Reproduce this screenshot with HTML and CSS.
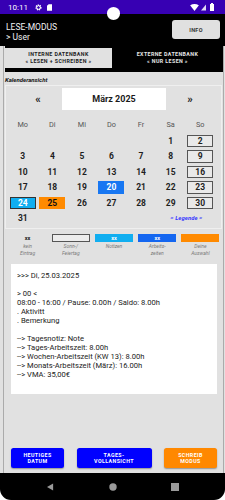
FILE: index.html
```html
<!DOCTYPE html>
<html lang="de">
<head>
<meta charset="utf-8">
<title>Kalender</title>
<link rel="stylesheet" href="styles.css">
</head>
<body>
<div class="screen">
  <div class="status">
    <span class="time">10:11</span>
    <svg class="ic-gear" viewBox="0 0 10 10" width="7" height="7"><circle cx="5" cy="5" r="3.3" fill="none" stroke="#fff" stroke-width="2.2" stroke-dasharray="1.6 1"/><circle cx="5" cy="5" r="2.6" fill="none" stroke="#fff" stroke-width="1.4"/></svg>
    <svg class="ic-sd" viewBox="0 0 6 8" width="5" height="7"><path d="M2 0H6V8H0V2Z" fill="#fff"/></svg>
    <span class="grow"></span>
    <svg class="ic-wifi" viewBox="0 0 10 8" width="9" height="7"><path d="M0 1.5Q5 -1.5 10 1.5L5 8Z" fill="#fff"/></svg>
    <svg class="ic-signal" viewBox="0 0 6 7" width="5" height="7"><path d="M6 0V7H0Z" fill="#fff" opacity="0.85"/></svg>
    <svg class="ic-batt" viewBox="0 0 4 8" width="4" height="8"><path d="M1 0H3V1H4V8H0V1H1Z" fill="#fff"/></svg>
  </div>
  <div class="camera"></div>

  <header class="appbar">
    <div class="title">LESE-MODUS<br>&gt; User</div>
    <button class="info">INFO</button>
  </header>

  <main class="main">
    <div class="card">
      <div class="tabs">
        <div class="tab active">INTERNE DATENBANK<br>« LESEN + SCHREIBEN »</div>
        <div class="tab">EXTERNE DATENBANK<br>« NUR LESEN »</div>
      </div>

      <div class="section-label">Kalenderansicht</div>

      <div class="calendar">
        <div class="month-row">
          <span class="arrow">«</span>
          <div class="month">März 2025</div>
          <span class="arrow">»</span>
        </div>
        <div class="grid weekdays">
          <span>Mo</span><span>Di</span><span>Mi</span><span>Do</span><span>Fr</span><span>Sa</span><span>So</span>
        </div>
        <div class="grid days">
          <span></span><span></span><span></span><span></span><span></span><span>1</span><span><b class="mark sun">2</b></span>
          <span>3</span><span>4</span><span>5</span><span>6</span><span>7</span><span>8</span><span><b class="mark sun">9</b></span>
          <span>10</span><span>11</span><span>12</span><span>13</span><span>14</span><span>15</span><span><b class="mark sun">16</b></span>
          <span>17</span><span>18</span><span>19</span><span><b class="mark work">20</b></span><span>21</span><span>22</span><span><b class="mark sun">23</b></span>
          <span><b class="mark note">24</b></span><span><b class="mark sel">25</b></span><span>26</span><span>27</span><span>28</span><span>29</span><span><b class="mark sun">30</b></span>
          <span>31</span><span></span><span></span><span></span><span></span><span class="legend-link">= Legende =</span>
        </div>
      </div>

      <div class="legend">
        <div class="leg-item"><div class="leg-box plain">xx</div><div class="leg-text">kein<br>Eintrag</div></div>
        <div class="leg-item"><div class="leg-box sun"></div><div class="leg-text">Sonn-/<br>Feiertag</div></div>
        <div class="leg-item"><div class="leg-box note">xx</div><div class="leg-text">Notizen</div></div>
        <div class="leg-item"><div class="leg-box work">xx</div><div class="leg-text">Arbeits-<br>zeiten</div></div>
        <div class="leg-item"><div class="leg-box sel"></div><div class="leg-text">Deine<br>Auswahl</div></div>
      </div>

      <div class="details">
        <p>&gt;&gt;&gt; Di, 25.03.2025</p>
        <p>&nbsp;</p>
        <p>&gt; 00 &lt;</p>
        <p>08:00 - 16:00 / Pause: 0.00h / Saldo: 8.00h</p>
        <p>. Aktivitt</p>
        <p>. Bemerkung</p>
        <p>&nbsp;</p>
        <p>--&gt; Tagesnotiz: Note</p>
        <p>--&gt; Tages-Arbeitszeit: 8.00h</p>
        <p>--&gt; Wochen-Arbeitszeit (KW 13): 8.00h</p>
        <p>--&gt; Monats-Arbeitszeit (März): 16.00h</p>
        <p>--&gt; VMA: 35,00€</p>
      </div>

      <div class="grow"></div>

      <div class="buttons">
        <button class="btn blue small">HEUTIGES<br>DATUM</button>
        <button class="btn blue wide">TAGES-<br>VOLLANSICHT</button>
        <button class="btn orange small">SCHREIB<br>MODUS</button>
      </div>
    </div>
  </main>

  <nav class="navbar">
    <svg viewBox="0 0 8 8" width="7" height="8"><path d="M7 0V8L0 4Z" fill="#9a9a9a"/></svg>
    <svg viewBox="0 0 8 8" width="8" height="8"><circle cx="4" cy="4" r="3.7" fill="#9a9a9a"/></svg>
    <svg viewBox="0 0 8 8" width="8" height="8"><rect x="0" y="0" width="8" height="8" fill="#9a9a9a"/></svg>
  </nav>
</div>
</body>
</html>
```

FILE: styles.css
```css
* { box-sizing: border-box; }

html, body {
  margin: 0;
  padding: 0;
  background: #fff;
}

body {
  font-family: Roboto, "Liberation Sans", sans-serif;
}

.screen {
  position: relative;
  width: 225px;
  height: 500px;
  display: flex;
  flex-direction: column;
  background: #000;
  border-radius: 0 0 11px 11px;
  overflow: hidden;
}

.grow { flex: 1; }

/* status bar */
.status {
  height: 14px;
  flex: none;
  background: #3700b3;
  color: #fff;
  display: flex;
  align-items: center;
  padding: 0 11px 0 8px;
  gap: 5px;
  font-size: 8px;
}
.status .time { margin-right: 2px; }
.status .ic-wifi { margin-right: -3px; }
.status .ic-signal { margin-right: -1px; }

.camera {
  position: absolute;
  left: 107px;
  top: 7px;
  width: 13px;
  height: 12.5px;
  border-radius: 50%;
  background: #fff;
}

/* app bar */
.appbar {
  height: 32px;
  flex: none;
  display: flex;
  justify-content: space-between;
  align-items: flex-start;
  padding: 6px 5px 0 6px;
}
.title {
  color: #f2f2f2;
  font-size: 8.5px;
  line-height: 9.5px;
  margin-top: 3px;
}
.info {
  width: 48px;
  height: 19px;
  border: none;
  border-radius: 3px;
  background: #e0e0e0;
  color: #333;
  font-family: inherit;
  font-size: 5.5px;
  font-weight: 700;
  letter-spacing: 0.3px;
  padding: 0;
}

/* main */
.main {
  flex: 1;
  display: flex;
  background: #e1e1e1;
}
.card {
  flex: 1;
  margin: 0 1px 0 3px;
  border-left: 1px solid #ababab;
  border-right: 1px solid #ababab;
  display: flex;
  flex-direction: column;
}

.tabs {
  height: 26px;
  margin: 0 0 0 1px;
  background: #000;
  display: flex;
  align-items: flex-start;
  padding-top: 2px;
}
.tab {
  height: 20px;
  flex: 1;
  display: flex;
  align-items: center;
  justify-content: center;
  text-align: center;
  font-size: 5.3px;
  line-height: 7px;
  font-weight: 700;
  letter-spacing: 0.4px;
  color: #e8e8e8;
}
.tab.active {
  flex: none;
  width: 107px;
  background: #e1e1e1;
  color: #222;
}

.section-label {
  font-size: 6px;
  font-weight: 700;
  font-style: italic;
  color: #111;
  line-height: 8px;
  padding: 4px 0 0 1px;
  height: 13px;
}

/* calendar */
.calendar {
  margin: 0 1px 0 1px;
  border: 1px solid #efefef;
  padding: 2px 3px 2px 2px;
}
.month-row {
  display: flex;
  align-items: center;
  height: 22px;
}
.arrow {
  width: 24px;
  text-align: center;
  font-size: 11px;
  font-weight: 700;
  color: #222;
}
.arrow:first-child { margin-left: 18px; }
.month {
  width: 104px;
  height: 22px;
  margin: 0 12px;
  background: #fff;
  display: flex;
  align-items: center;
  justify-content: center;
  font-size: 9px;
  font-weight: 700;
  color: #1a1a1a;
}

.grid {
  display: grid;
  grid-template-columns: repeat(7, 1fr);
  width: 207px;
}
.weekdays {
  height: 14px;
  margin-top: 7px;
  align-items: center;
  font-size: 7.3px;
  color: #555;
}
.weekdays span, .days span { text-align: center; }
.days {
  margin-top: 2px;
  grid-auto-rows: 15.5px;
  align-items: center;
  font-size: 8.5px;
  font-weight: 700;
  color: #1e1e1e;
}
.days span {
  display: flex;
  align-items: center;
  justify-content: center;
  height: 100%;
}
.mark {
  width: 26px;
  height: 12.5px;
  display: flex;
  align-items: center;
  justify-content: center;
  font-weight: 700;
}
.mark.sun {
  border: 1.5px solid #555;
  background: #e9e9e9;
}
.mark.work {
  background: #1877f2;
  color: #fff;
}
.mark.note {
  background: #11aef0;
  color: #fff;
  border: 1px solid #333;
}
.mark.sel {
  background: #ff8a00;
  color: #111;
}
.days .legend-link {
  grid-column: 6 / span 2;
  font-size: 5.8px;
  font-style: italic;
  font-weight: 700;
  color: #3535ff;
  padding-left: 2px;
  letter-spacing: 0.1px;
}

/* legend */
.legend {
  display: grid;
  grid-template-columns: repeat(5, 1fr);
  padding: 5px 1px 0 2px;
  height: 34px;
}
.leg-item {
  display: flex;
  flex-direction: column;
  align-items: center;
}
.leg-box {
  width: 38px;
  height: 8px;
  font-size: 5.5px;
  line-height: 8px;
  font-weight: 700;
  text-align: center;
  color: #fff;
}
.leg-box.plain { color: #111; }
.leg-box.sun { border: 1px solid #555; background: #ececec; }
.leg-box.note { background: #11aef0; }
.leg-box.work { background: #1466f0; }
.leg-box.sel { background: #ff8a00; }
.leg-text {
  margin-top: 0.5px;
  font-size: 5px;
  line-height: 7px;
  font-style: italic;
  color: #7a7a7a;
  text-align: center;
}

/* details */
.details {
  margin: 1px 6px 0 7px;
  height: 130px;
  background: #fff;
  padding: 7px 6px 0 6px;
}
.details p {
  margin: 0;
  font-size: 7.6px;
  line-height: 9px;
  color: #222;
  white-space: nowrap;
}

/* buttons */
.buttons {
  display: flex;
  justify-content: space-between;
  padding: 0 6px 5px 7px;
}
.btn {
  height: 20px;
  border: none;
  border-radius: 2.5px;
  padding: 0;
  font-family: inherit;
  font-size: 5.3px;
  line-height: 6.5px;
  font-weight: 700;
  letter-spacing: 0.4px;
  color: #fff;
  box-shadow: 0 1px 1.5px rgba(0,0,0,0.35);
}
.btn.small { width: 53px; }
.btn.wide { width: 75px; }
.btn.blue { background: #0000ff; }
.btn.orange { background: #ff8800; }

/* nav bar */
.navbar {
  height: 27px;
  flex: none;
  display: flex;
  align-items: center;
  padding: 0 0 0 47px;
  gap: 0;
}
.navbar svg:nth-child(1) { margin-right: 55px; }
.navbar svg:nth-child(2) { margin-right: 54px; }
```
